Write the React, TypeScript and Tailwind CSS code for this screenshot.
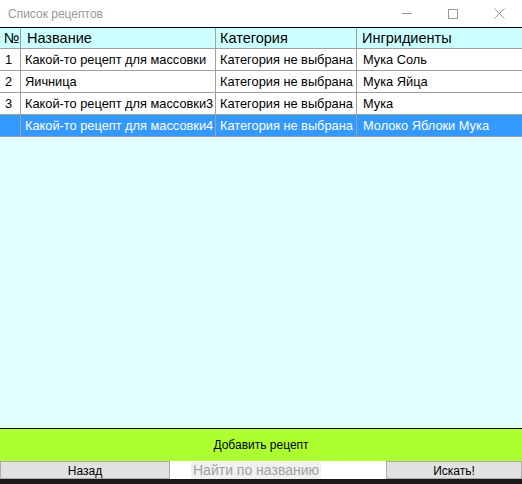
import React from "react";

type Recipe = {
  id: string;
  name: string;
  category: string;
  ingredients: string;
};

const RECIPES: Recipe[] = [
  { id: "1", name: "Какой-то рецепт для массовки", category: "Категория не выбрана", ingredients: "Мука Соль" },
  { id: "2", name: "Яичница", category: "Категория не выбрана", ingredients: "Мука Яйца" },
  { id: "3", name: "Какой-то рецепт для массовки3", category: "Категория не выбрана", ingredients: "Мука" },
  { id: "", name: "Какой-то рецепт для массовки4", category: "Категория не выбрана", ingredients: "Молоко Яблоки Мука" },
];

const cols = "grid grid-cols-[21px_195px_141px_1fr]";

const TitleBar = () => (
  <div className="h-[27px] flex items-center bg-white">
    <span className="pl-[8px] text-[12px] text-[#999999] flex-1">Список рецептов</span>
    <div className="flex h-full">
      <div className="w-[46px] flex items-center justify-center">
        <div className="w-[10px] h-px bg-[#999999]" />
      </div>
      <div className="w-[46px] flex items-center justify-center">
        <div className="w-[10px] h-[10px] border border-[#999999]" />
      </div>
      <div className="w-[46px] flex items-center justify-center">
        <svg width="11" height="11" viewBox="0 0 11 11" fill="none" stroke="#999999" strokeWidth="1">
          <path d="M0.5 0.5 L10.5 10.5 M10.5 0.5 L0.5 10.5" />
        </svg>
      </div>
    </div>
  </div>
);

export default function App() {
  return (
    <div className="w-[522px] h-[484px] flex flex-col bg-[#e0ffff] font-['Liberation_Sans',Arial,sans-serif] text-black overflow-hidden">
      <TitleBar />
      <div className="flex-1 flex flex-col border-t border-black">
        <div className={`${cols} h-[21px] bg-[#ccffff] text-[14.5px] border-b border-[#a0a0a0]`}>
          <div className="pl-[4px] border-r border-[#a0a0a0] leading-[21px]">№</div>
          <div className="pl-[6px] border-r border-[#a0a0a0] leading-[21px]">Название</div>
          <div className="pl-[4px] border-r border-[#a0a0a0] leading-[21px]">Категория</div>
          <div className="pl-[5px] leading-[21px]">Ингридиенты</div>
        </div>
        {RECIPES.map((r, i) => {
          const selected = i === RECIPES.length - 1;
          return (
            <div
              key={i}
              className={`${cols} h-[22px] text-[12.8px] border-b border-[#a0a0a0] ${
                selected ? "bg-[#3399ff] text-white" : "bg-white"
              }`}
            >
              <div className="pl-[5px] border-r border-[#a0a0a0] leading-[21px]">{r.id}</div>
              <div className="pl-[4px] border-r border-[#a0a0a0] leading-[21px] whitespace-nowrap overflow-hidden">{r.name}</div>
              <div className="pl-[4px] border-r border-[#a0a0a0] leading-[21px] whitespace-nowrap overflow-hidden">{r.category}</div>
              <div className="pl-[6px] leading-[21px] whitespace-nowrap">{r.ingredients}</div>
            </div>
          );
        })}
      </div>
      <button className="h-[33px] shrink-0 bg-[#adff2f] border-t border-black text-[12px] text-black">
        Добавить рецепт
      </button>
      <div className="h-[18px] shrink-0 flex text-[12px]">
        <button className="w-[170px] bg-[#e1e1e1] border border-[#adadad]">Назад</button>
        <div className="w-[216px] bg-white flex items-center">
          <span className="ml-[21px] px-[2px] bg-[#f0f0f0] text-[#a0a0a0] text-[14px] leading-[17px]">Найти по названию</span>
        </div>
        <button className="flex-1 bg-[#e1e1e1] border border-[#adadad]">Искать!</button>
      </div>
      <div className="h-[5px] shrink-0 bg-[#1a1a1a]" />
    </div>
  );
}
